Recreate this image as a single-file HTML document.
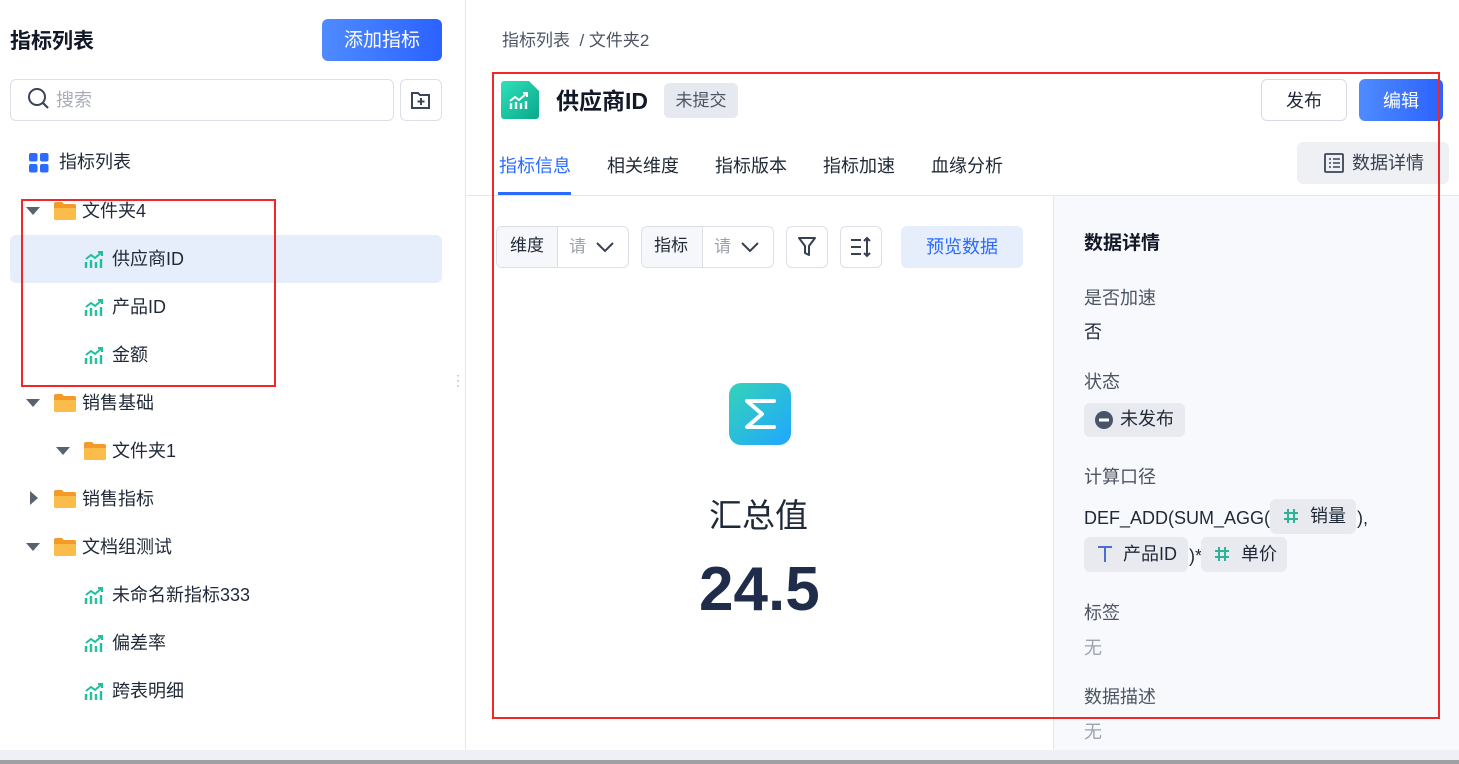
<!DOCTYPE html>
<html><head><meta charset="utf-8"><style>
*{box-sizing:border-box;margin:0;padding:0}
body{width:1459px;height:764px;position:relative;overflow:hidden;background:#fff;font-family:"Liberation Sans","Noto Sans CJK SC",sans-serif;color:#1f2937;font-size:18px}
.a{position:absolute;white-space:nowrap;line-height:1.31}
.ic{position:absolute}
.tag{position:absolute;background:#e8eaf0;border-radius:6px}
</style></head><body>
<div class="a" style="left:10px;top:28px;font-size:21px;font-weight:bold;color:#111827">指标列表</div>
<div class="a" style="left:322px;top:19px;width:120px;height:42px;border-radius:6px;background:linear-gradient(90deg,#4f8bff,#2b62ff);color:#fff;font-size:19px;line-height:44px;text-align:center">添加指标</div>
<div class="a" style="left:10px;top:79px;width:384px;height:42px;border:1px solid #dcdfe8;border-radius:6px"></div>
<svg class="ic" style="left:27px;top:87px" width="24" height="24" viewBox="0 0 24 24"><circle cx="10" cy="10" r="8" fill="none" stroke="#3b4458" stroke-width="2"/><path d="M16 16l5 5" stroke="#3b4458" stroke-width="2.2"/></svg>
<div class="a" style="left:56px;top:89px;color:#a8adb8;font-size:18px">搜索</div>
<div class="a" style="left:400px;top:79px;width:42px;height:42px;border:1px solid #dcdfe8;border-radius:6px"></div>
<svg class="ic" style="left:410px;top:90px" width="22" height="20" viewBox="0 0 22 20"><path d="M2 3h6l2 2h9v13H2z" fill="none" stroke="#3b4458" stroke-width="2"/><path d="M11 8v7M7.5 11.5h7" stroke="#3b4458" stroke-width="2"/></svg>
<div class="a" style="left:465px;top:0;width:1px;height:750px;background:#e5e7eb"></div>
<div class="a" style="left:456px;top:373px;color:#999;font-size:12px;line-height:5px">·<br>·<br>·</div>

<svg class="ic" style="left:29px;top:153px" width="20" height="20"><rect x="0" y="0" width="8.5" height="8.5" rx="2" fill="#2b6bff"/><rect x="11" y="0" width="8.5" height="8.5" rx="2" fill="#2b6bff"/><rect x="0" y="11" width="8.5" height="8.5" rx="2" fill="#2b6bff"/><rect x="11" y="11" width="8.5" height="8.5" rx="2" fill="#2b6bff"/></svg>
<div class="a" style="left:59px;top:151px">指标列表</div>

<div class="a" style="left:10px;top:235px;width:432px;height:48px;background:#e6eefc;border-radius:6px"></div>

<svg width="0" height="0" style="position:absolute"><defs>
<symbol id="fold" viewBox="0 0 24 20"><path d="M1 3a2 2 0 0 1 2-2h6l2 2h10a2 2 0 0 1 2 2v12a2 2 0 0 1-2 2H3a2 2 0 0 1-2-2z" fill="#f39a2b"/><path d="M1 7h22v10a2 2 0 0 1-2 2H3a2 2 0 0 1-2-2z" fill="#fbbd4a"/></symbol>
<symbol id="mt" viewBox="0 0 20 20"><path d="M2 18v-6M7 18v-8M12 18v-6M17 18v-9" stroke="#1fbf9f" stroke-width="2.4"/><path d="M2 9l5-4 4 3 7-6M14 2h4v4" fill="none" stroke="#1fbf9f" stroke-width="2"/></symbol>
</defs></svg>

<div class="a" style="left:26px;top:207px;width:0;height:0;border-left:7px solid transparent;border-right:7px solid transparent;border-top:8px solid #5a6272"></div>
<svg class="ic" style="left:53px;top:201px" width="24" height="20"><use href="#fold"/></svg>
<div class="a" style="left:82px;top:200px">文件夹4</div>
<svg class="ic" style="left:84px;top:250px" width="20" height="20"><use href="#mt"/></svg>
<div class="a" style="left:112px;top:248px">供应商ID</div>
<svg class="ic" style="left:84px;top:298px" width="20" height="20"><use href="#mt"/></svg>
<div class="a" style="left:112px;top:296px">产品ID</div>
<svg class="ic" style="left:84px;top:346px" width="20" height="20"><use href="#mt"/></svg>
<div class="a" style="left:112px;top:344px">金额</div>
<div class="a" style="left:26px;top:399px;width:0;height:0;border-left:7px solid transparent;border-right:7px solid transparent;border-top:8px solid #5a6272"></div>
<svg class="ic" style="left:53px;top:393px" width="24" height="20"><use href="#fold"/></svg>
<div class="a" style="left:82px;top:392px">销售基础</div>
<div class="a" style="left:56px;top:447px;width:0;height:0;border-left:7px solid transparent;border-right:7px solid transparent;border-top:8px solid #5a6272"></div>
<svg class="ic" style="left:83px;top:441px" width="24" height="20"><use href="#fold"/></svg>
<div class="a" style="left:112px;top:440px">文件夹1</div>
<div class="a" style="left:30px;top:491px;width:0;height:0;border-top:7px solid transparent;border-bottom:7px solid transparent;border-left:8px solid #5a6272"></div>
<svg class="ic" style="left:53px;top:489px" width="24" height="20"><use href="#fold"/></svg>
<div class="a" style="left:82px;top:488px">销售指标</div>
<div class="a" style="left:26px;top:543px;width:0;height:0;border-left:7px solid transparent;border-right:7px solid transparent;border-top:8px solid #5a6272"></div>
<svg class="ic" style="left:53px;top:537px" width="24" height="20"><use href="#fold"/></svg>
<div class="a" style="left:82px;top:536px">文档组测试</div>
<svg class="ic" style="left:84px;top:586px" width="20" height="20"><use href="#mt"/></svg>
<div class="a" style="left:112px;top:584px">未命名新指标333</div>
<svg class="ic" style="left:84px;top:634px" width="20" height="20"><use href="#mt"/></svg>
<div class="a" style="left:112px;top:632px">偏差率</div>
<svg class="ic" style="left:84px;top:682px" width="20" height="20"><use href="#mt"/></svg>
<div class="a" style="left:112px;top:680px">跨表明细</div>

<div class="a" style="left:502px;top:30px;color:#4b5563;font-size:17px">指标列表 &nbsp;/ 文件夹2</div>
<svg class="ic" style="left:501px;top:81px" width="38" height="38" viewBox="0 0 38 38"><defs><linearGradient id="g1" x1="0" y1="0" x2="1" y2="1"><stop offset="0" stop-color="#2fe0b8"/><stop offset="1" stop-color="#0aa88c"/></linearGradient></defs><path d="M3 0h25l10 10v25a3 3 0 0 1-3 3H3a3 3 0 0 1-3-3V3a3 3 0 0 1 3-3z" fill="url(#g1)"/><path d="M10 28v-6M15 28v-7M20 28v-6M25 28v-8" stroke="#fff" stroke-width="2.4"/><path d="M9 20l5-4 4 3 7-6M22 12h4v4" fill="none" stroke="#fff" stroke-width="2"/></svg>
<div class="a" style="left:556px;top:86px;font-size:23px;font-weight:bold;color:#111827">供应商ID</div>
<div class="a" style="left:664px;top:83px;width:74px;height:35px;background:#e6e9ef;border-radius:5px;color:#4b5563;font-size:17px;line-height:35px;text-align:center">未提交</div>
<div class="a" style="left:1261px;top:79px;width:86px;height:42px;border:1px solid #d8dbe3;border-radius:6px;text-align:center;line-height:42px;font-size:18px">发布</div>
<div class="a" style="left:1359px;top:79px;width:84px;height:42px;background:linear-gradient(90deg,#4f8bff,#2b62ff);border-radius:6px;text-align:center;line-height:44px;font-size:18px;color:#fff">编辑</div>

<div class="a" style="left:499px;top:155px;color:#2b6bff">指标信息</div>
<div class="a" style="left:607px;top:155px">相关维度</div>
<div class="a" style="left:715px;top:155px">指标版本</div>
<div class="a" style="left:823px;top:155px">指标加速</div>
<div class="a" style="left:931px;top:155px">血缘分析</div>
<div class="a" style="left:498px;top:192px;width:73px;height:3px;background:#2b6bff"></div>
<div class="a" style="left:466px;top:195px;width:993px;height:1px;background:#e5e7eb"></div>
<div class="a" style="left:1297px;top:142px;width:152px;height:42px;background:#eef0f4;border-radius:6px"></div>
<svg class="ic" style="left:1324px;top:153px" width="20" height="20"><rect x="1" y="1" width="18" height="18" rx="1" fill="none" stroke="#3b4458" stroke-width="1.8"/><path d="M5 6h2M9 6h7M5 10h2M9 10h7M5 14h2M9 14h7" stroke="#3b4458" stroke-width="1.6"/></svg>
<div class="a" style="left:1352px;top:152px;font-size:18px;color:#374151">数据详情</div>

<div class="a" style="left:496px;top:226px;width:133px;height:42px;border:1px solid #dcdfe8;border-radius:6px;overflow:hidden"><div style="position:absolute;left:0;top:0;width:61px;height:40px;background:#f6f7fa;border-right:1px solid #dcdfe8"></div></div>
<div class="a" style="left:510px;top:235px;font-size:17px">维度</div>
<div class="a" style="left:569px;top:236px;font-size:17px;color:#9ca3af">请</div>
<svg class="ic" style="left:595px;top:240px" width="20" height="14"><path d="M2 3l8 8 8-8" fill="none" stroke="#374151" stroke-width="2"/></svg>
<div class="a" style="left:641px;top:226px;width:133px;height:42px;border:1px solid #dcdfe8;border-radius:6px;overflow:hidden"><div style="position:absolute;left:0;top:0;width:61px;height:40px;background:#f6f7fa;border-right:1px solid #dcdfe8"></div></div>
<div class="a" style="left:654px;top:235px;font-size:17px">指标</div>
<div class="a" style="left:714px;top:236px;font-size:17px;color:#9ca3af">请</div>
<svg class="ic" style="left:740px;top:240px" width="20" height="14"><path d="M2 3l8 8 8-8" fill="none" stroke="#374151" stroke-width="2"/></svg>
<div class="a" style="left:786px;top:226px;width:42px;height:42px;border:1px solid #dcdfe8;border-radius:6px"></div>
<svg class="ic" style="left:797px;top:236px" width="20" height="22"><path d="M2 2h16l-6 8v9l-4-2v-7z" fill="none" stroke="#374151" stroke-width="2" stroke-linejoin="round"/></svg>
<div class="a" style="left:840px;top:226px;width:42px;height:42px;border:1px solid #dcdfe8;border-radius:6px"></div>
<svg class="ic" style="left:849px;top:236px" width="24" height="22"><path d="M2 4h10M2 11h10M2 18h10M18 2v18M15 5l3-3 3 3M15 17l3 3 3-3" fill="none" stroke="#374151" stroke-width="2"/></svg>
<div class="a" style="left:901px;top:226px;width:122px;height:42px;background:#e6eefc;border-radius:6px;color:#2b6bff;line-height:42px;text-align:center;font-size:18px">预览数据</div>

<svg class="ic" style="left:729px;top:383px" width="62" height="62" viewBox="0 0 62 62"><defs><linearGradient id="g2" x1="0" y1="0" x2="1" y2="1"><stop offset="0" stop-color="#35d3b8"/><stop offset="1" stop-color="#1fa7ff"/></linearGradient></defs><rect width="62" height="62" rx="12" fill="url(#g2)"/><path d="M45 18H18l15 13-15 13h27" fill="none" stroke="#fff" stroke-width="4" stroke-linejoin="round" stroke-linecap="round"/></svg>
<div class="a" style="left:709px;top:494px;font-size:33px;color:#1f2937">汇总值</div>
<div class="a" style="left:699px;top:549px;font-size:62px;font-weight:bold;color:#1f2d4a">24.5</div>

<div class="a" style="left:1053px;top:196px;width:406px;height:554px;background:#f8f9fc;border-left:1px solid #e5e7eb"></div>
<div class="a" style="left:1084px;top:232px;font-size:19px;font-weight:bold;color:#111827">数据详情</div>
<div class="a" style="left:1084px;top:287px;color:#4b5563">是否加速</div>
<div class="a" style="left:1084px;top:321px">否</div>
<div class="a" style="left:1084px;top:371px;color:#4b5563">状态</div>
<div class="tag" style="left:1084px;top:403px;width:101px;height:34px"></div>
<svg class="ic" style="left:1095px;top:411px" width="18" height="18"><circle cx="9" cy="9" r="9" fill="#4a5468"/><rect x="4" y="7.5" width="10" height="3" fill="#fff"/></svg>
<div class="a" style="left:1120px;top:408px">未发布</div>
<div class="a" style="left:1084px;top:466px;color:#4b5563">计算口径</div>
<div class="a" style="left:1084px;top:507px">DEF_ADD(SUM_AGG(</div>
<div class="tag" style="left:1270px;top:499px;width:86px;height:35px"></div>
<svg class="ic" style="left:1283px;top:508px" width="16" height="16"><path d="M5 1v14M11 1v14M1 5h14M1 11h14" stroke="#2bb596" stroke-width="2"/></svg>
<div class="a" style="left:1310px;top:505px">销量</div>
<div class="a" style="left:1357px;top:507px">),</div>
<div class="tag" style="left:1084px;top:537px;width:104px;height:35px"></div>
<svg class="ic" style="left:1097px;top:545px" width="16" height="18"><path d="M1 2h14M8 2v15" stroke="#4a6fd0" stroke-width="2"/></svg>
<div class="a" style="left:1123px;top:543px">产品ID</div>
<div class="a" style="left:1189px;top:545px">)*</div>
<div class="tag" style="left:1201px;top:537px;width:86px;height:35px"></div>
<svg class="ic" style="left:1214px;top:546px" width="16" height="16"><path d="M5 1v14M11 1v14M1 5h14M1 11h14" stroke="#2bb596" stroke-width="2"/></svg>
<div class="a" style="left:1241px;top:543px">单价</div>
<div class="a" style="left:1084px;top:602px;color:#4b5563">标签</div>
<div class="a" style="left:1084px;top:637px;color:#9ca3af">无</div>
<div class="a" style="left:1084px;top:686px;color:#4b5563">数据描述</div>
<div class="a" style="left:1084px;top:721px;color:#9ca3af">无</div>

<div class="a" style="left:0;top:750px;width:1459px;height:10px;background:#eef0f6"></div>
<div class="a" style="left:0;top:760px;width:1459px;height:4px;background:#a0a0a0"></div>

<div class="a" style="left:21px;top:199px;width:255px;height:188px;border:2px solid #f02828"></div>
<div class="a" style="left:492px;top:72px;width:948px;height:647px;border:2px solid #f02828"></div>
</body></html>
